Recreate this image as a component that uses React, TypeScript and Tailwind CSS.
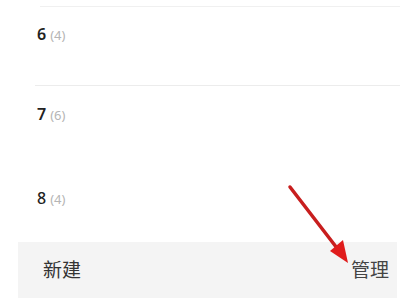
import React from "react";

const font = { fontFamily: '"Noto Sans", "Noto Sans CJK SC", sans-serif' };

export default function App() {
  return (
    <div className="relative w-[400px] h-[300px] bg-white overflow-hidden" style={font}>
      <div className="h-[6px]" />
      <div className="ml-[40px] border-t border-[#f0f0f0]" />
      <div className="pt-[17px] h-[78px] pl-[37px]">
        <div className="flex items-baseline leading-[20px]">
          <span className="text-[16px] font-semibold text-[#222]">6</span>
          <span className="ml-[4px] text-[13px] text-[#b5b5b5]">(4)</span>
        </div>
      </div>
      <div className="ml-[35px] border-t border-[#ececec]" />
      <div className="pt-[18px] h-[80px] pl-[37px]">
        <div className="flex items-baseline leading-[20px]">
          <span className="text-[16px] font-semibold text-[#222]">7</span>
          <span className="ml-[4px] text-[13px] text-[#b5b5b5]">(6)</span>
        </div>
      </div>
      <div className="pt-[22px] h-[76px] pl-[37px]">
        <div className="flex items-baseline leading-[20px]">
          <span className="text-[16px] font-medium text-[#222]">8</span>
          <span className="ml-[4px] text-[13px] text-[#b5b5b5]">(4)</span>
        </div>
      </div>
      <div className="ml-[18px] mr-[3px] h-[56px] bg-[#f4f4f4] flex items-center justify-between pl-[25px] pr-[8px]">
        <span className="text-[19px] text-[#333] leading-[24px]">新建</span>
        <span className="text-[19px] text-[#444] leading-[24px]">管理</span>
      </div>
      <svg className="absolute left-0 top-0" width="400" height="300" viewBox="0 0 400 300">
        <line x1="290" y1="187" x2="340" y2="252" stroke="#c81e1e" strokeWidth="3.5" strokeLinecap="round" />
        <polygon points="348,263 330,251 343,240" fill="#e01c1c" />
      </svg>
    </div>
  );
}
